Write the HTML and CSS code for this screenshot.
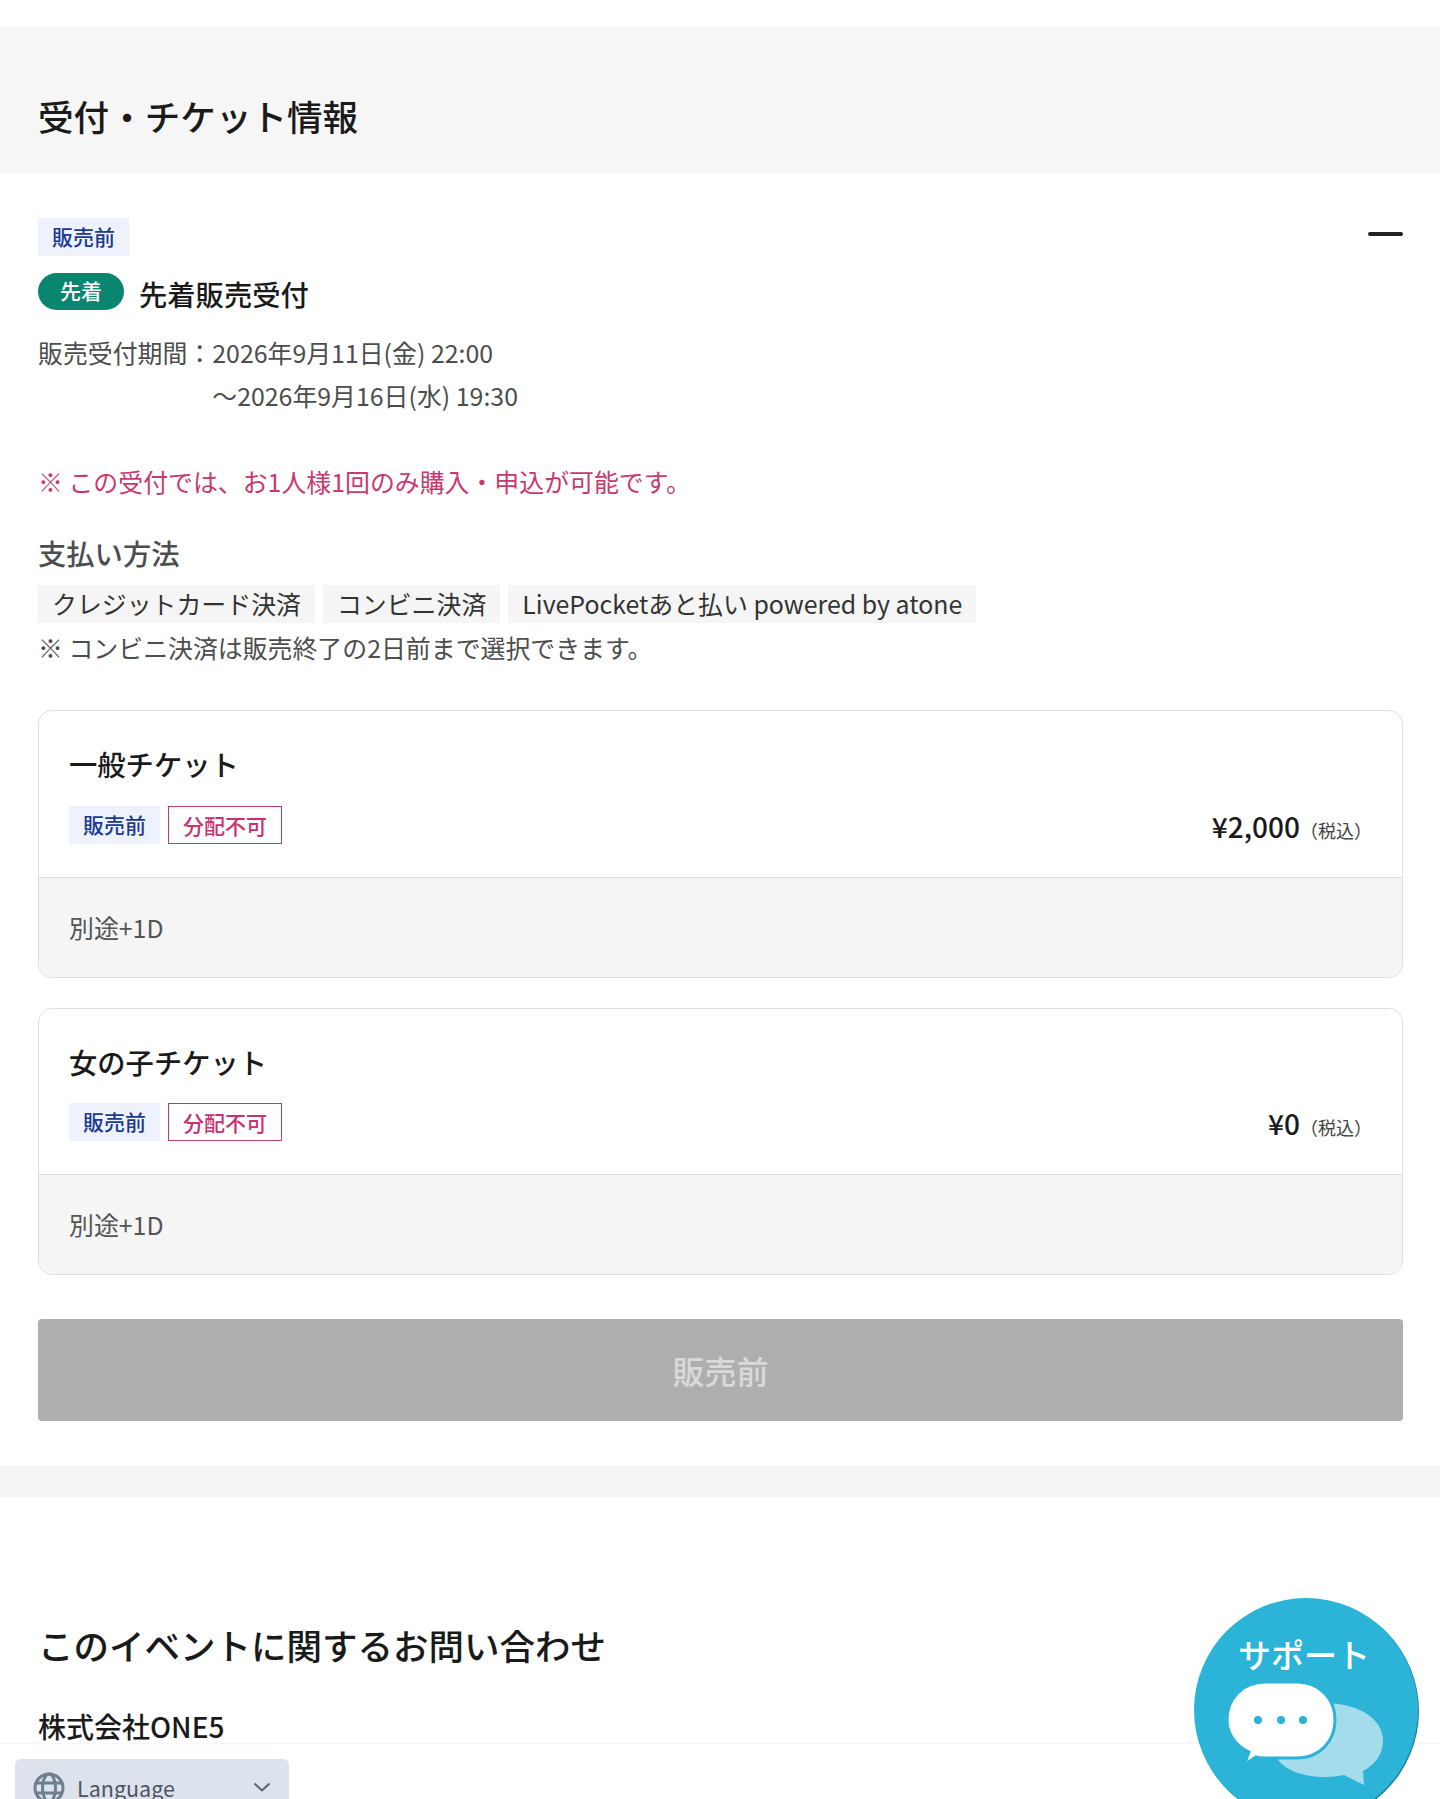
FILE: index.html
```html
<!DOCTYPE html>
<html lang="ja">
<head>
<meta charset="utf-8">
<title>受付・チケット情報</title>
<link rel="stylesheet" href="styles.css">
</head>
<body>
<main class="page">
  <header class="band"><h2 class="band-title">受付・チケット情報</h2></header>
  <section class="sale">
    <div class="sale-top">
      <span class="tag tag-blue">販売前</span>
      <span class="minus"></span>
    </div>
    <div class="sale-name">
      <span class="pill">先着</span>
      <h3 class="sale-title">先着販売受付</h3>
    </div>
    <div class="period">
      <span>販売受付期間：</span>
      <span>2026年9月11日(金) 22:00<br>〜2026年9月16日(水) 19:30</span>
    </div>
    <p class="note-red">※ この受付では、お1人様1回のみ購入・申込が可能です。</p>
    <h4 class="pay-title">支払い方法</h4>
    <div class="chips">
      <span class="chip">クレジットカード決済</span>
      <span class="chip">コンビニ決済</span>
      <span class="chip">LivePocketあと払い powered by atone</span>
    </div>
    <p class="note">※ コンビニ決済は販売終了の2日前まで選択できます。</p>

    <article class="ticket">
      <div class="ticket-main">
        <h5 class="ticket-name">一般チケット</h5>
        <div class="ticket-row">
          <div class="tags">
            <span class="tag tag-blue">販売前</span>
            <span class="tag tag-red">分配不可</span>
          </div>
          <div class="price"><b>¥2,000</b><small>（税込）</small></div>
        </div>
      </div>
      <div class="ticket-foot">別途+1D</div>
    </article>

    <article class="ticket ticket-second">
      <div class="ticket-main">
        <h5 class="ticket-name">女の子チケット</h5>
        <div class="ticket-row">
          <div class="tags">
            <span class="tag tag-blue">販売前</span>
            <span class="tag tag-red">分配不可</span>
          </div>
          <div class="price"><b>¥0</b><small>（税込）</small></div>
        </div>
      </div>
      <div class="ticket-foot">別途+1D</div>
    </article>

    <button class="buy" type="button" disabled>販売前</button>
  </section>
  <div class="gap"></div>
  <section class="contact">
    <h2 class="contact-title">このイベントに関するお問い合わせ</h2>
    <p class="org">株式会社ONE5</p>
  </section>
</main>

<footer class="bar">
  <div class="lang">
    <svg class="globe" viewBox="0 0 32 32" fill="none" stroke="#6f7f90" stroke-width="3">
      <circle cx="16" cy="16" r="14"/>
      <ellipse cx="16" cy="16" rx="6.5" ry="14"/>
      <path d="M3 11h26M3 21h26"/>
    </svg>
    <span class="lang-text">Language</span>
    <svg class="chev" viewBox="0 0 18 10" fill="none" stroke="#56636f" stroke-width="2"><path d="M1.500 1.500 9 8.500l7.500-7"/></svg>
  </div>
</footer>

<svg class="support" viewBox="0 0 230 230">
  <circle cx="113" cy="114" r="112" fill="#1d7f99"/>
  <circle cx="112" cy="113" r="112" fill="#2bb4d8"/>
  <path d="M130 106c32 0 59 14 59 38 0 13-8 24-20 30l1 14-20-10c-6 1-12 2-18 2-24 0-42-7-50-20z" fill="#a5dcec"/>
  <path d="M71 85h32c23 0 38 17 38 38s-15 38-38 38H71c-3 0-6 0-9-1l-12 8 5-13c-13-6-22-18-22-32 0-21 15-38 38-38z" fill="#fff" stroke="#2bb4d8" stroke-width="3"/>
  <circle cx="64" cy="123" r="4" fill="#2bb4d8"/>
  <circle cx="87" cy="123" r="4" fill="#2bb4d8"/>
  <circle cx="109" cy="123" r="4" fill="#2bb4d8"/>
  <text class="support-text" x="110" y="71" text-anchor="middle">サポート</text>
</svg>
</body>
</html>
```

FILE: styles.css
```css
* { box-sizing: border-box; }
html, body { margin: 0; padding: 0; }
body {
  background: #fff;
  color: #1a1a1a;
  font-family: "Noto Sans CJK JP", "Noto Sans", sans-serif;
  font-size: 24.9px;
  height: 1799px;
  overflow: hidden;
  position: relative;
}
h2, h3, h4, h5, p { margin: 0; }
.page { padding-top: 27px; }
.band {
  background: #f6f6f6;
  height: 146px;
  padding: 64px 38px 0;
}
.band-title { font-size: 35.600px; line-height: 50px; font-weight: 500; }
.sale { padding: 45px 37px 45px 38px; }
.sale-top { display: flex; justify-content: space-between; align-items: flex-start; }
.tag {
  display: inline-block;
  height: 38px;
  line-height: 36px;
  padding: 0 14px;
  font-size: 21px;
  font-weight: 500;
}
.tag-blue { background: #edf2fc; color: #1c3a8f; }
.tag-red { background: #fff; color: #c9306f; border: 1px solid #b8406f; }
.minus { width: 35px; height: 4px; margin-top: 14px; background: #222; border-radius: 2px; }
.sale-name { display: flex; align-items: flex-start; gap: 15px; margin-top: 17px; }
.pill {
  width: 86px;
  height: 37px;
  line-height: 35px;
  border-radius: 19px;
  background: #0a8570;
  color: #fff;
  font-size: 21px;
  font-weight: 500;
  text-align: center;
}
.sale-title { font-size: 28.300px; line-height: 42px; font-weight: 500; }
.period {
  display: flex;
  margin-top: 16px;
  color: #4d4d4d;
  line-height: 43px;
}
.note-red { margin-top: 43px; color: #c8396f; line-height: 43px; }
.pay-title { margin-top: 28px; font-size: 28.300px; line-height: 44px; font-weight: 500; color: #4d4d4d; }
.chips { display: flex; gap: 8px; margin-top: 10px; }
.chip {
  height: 38px;
  line-height: 36px;
  padding: 0 14px;
  background: #f5f5f5;
  color: #333;
}
.note { margin-top: 3px; color: #4d4d4d; line-height: 43px; }
.ticket {
  margin-top: 41px;
  border: 1px solid #dedede;
  border-radius: 14px;
  overflow: hidden;
}
.ticket-second { margin-top: 30px; }
.ticket-main { height: 167px; padding: 31px 30px 0; border-bottom: 1px solid #dedede; }
.ticket-second .ticket-main { height: 166px; }
.ticket-name { font-size: 28.300px; line-height: 44px; font-weight: 500; }
.ticket-row { display: flex; justify-content: space-between; align-items: center; margin-top: 19px; }
.ticket-second .ticket-row { margin-top: 18px; }
.tags { display: flex; gap: 8px; }
.price { height: 38px; line-height: 38px; margin-top: 2px; }
.price b { font-size: 28px; font-weight: 500; }
.price small { font-size: 18px; color: #444; }
.ticket-foot {
  height: 99px;
  padding: 28px 30px 0;
  background: #f5f5f5;
  color: #555;
  line-height: 43px;
}
.buy {
  display: block;
  width: 100%;
  height: 102px;
  margin-top: 44px;
  border: 0;
  border-radius: 4px;
  background: #aeaeae;
  color: #d9d9d9;
  font: 500 32px "Noto Sans CJK JP", sans-serif;
}
.gap { height: 31px; background: #f5f5f5; box-shadow: inset 0 4px 4px -3px #ececec; }
.contact { padding: 121px 38px 0; }
.contact-title { font-size: 35.500px; line-height: 54px; font-weight: 500; }
.org { margin-top: 32px; font-size: 28px; line-height: 44px; font-weight: 500; }
.bar {
  position: absolute;
  left: 0; right: 0; top: 1743px; bottom: 0;
  background: #fff;
  border-top: 1px solid #f6f6f6;
  overflow: hidden;
}
.lang {
  position: absolute;
  left: 15px; top: 15px;
  width: 274px; height: 60px;
  display: flex;
  align-items: flex-start;
  padding: 13px 18px 0 18px;
  background: #dde3ec;
  border-radius: 6px;
}
.globe { width: 32px; height: 32px; flex: none; }
.lang-text { margin-left: 12px; color: #4d5560; font-size: 21.500px; line-height: 32px; }
.chev { width: 18px; height: 10px; margin-left: auto; margin-top: 10px; }
.support { position: absolute; left: 1194px; top: 1597px; width: 230px; height: 230px; }
.support-text { font-size: 33px; font-weight: 500; fill: #fff; font-family: "Noto Sans CJK JP", sans-serif; }
```
